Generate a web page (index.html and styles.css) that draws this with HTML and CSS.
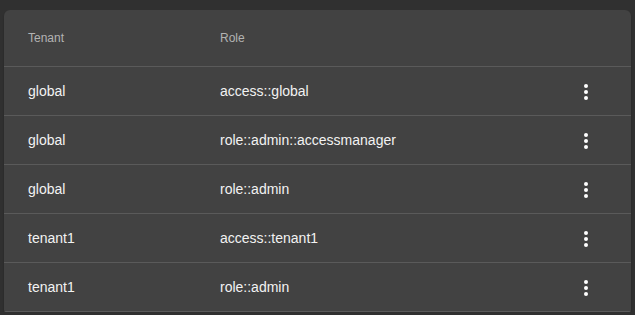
FILE: index.html
```html
<!DOCTYPE html>
<html lang="en">
  <head>
    <meta charset="UTF-8" />
    <meta name="viewport" content="width=device-width, initial-scale=1.0" />
    <title>Tenant roles</title>
    <link rel="stylesheet" href="styles.css">
  </head>
  <body>
    <div class="card">
      <table class="roles">
        <thead>
          <tr>
            <th class="col-tenant">Tenant</th>
            <th class="col-role">Role</th>
            <th class="col-menu"></th>
          </tr>
        </thead>
        <tbody>
          <tr>
            <td>global</td>
            <td>access::global</td>
            <td class="col-menu"><span class="kebab"><i></i><i></i><i></i></span></td>
          </tr>
          <tr>
            <td>global</td>
            <td>role::admin::accessmanager</td>
            <td class="col-menu"><span class="kebab"><i></i><i></i><i></i></span></td>
          </tr>
          <tr>
            <td>global</td>
            <td>role::admin</td>
            <td class="col-menu"><span class="kebab"><i></i><i></i><i></i></span></td>
          </tr>
          <tr>
            <td>tenant1</td>
            <td>access::tenant1</td>
            <td class="col-menu"><span class="kebab"><i></i><i></i><i></i></span></td>
          </tr>
          <tr>
            <td>tenant1</td>
            <td>role::admin</td>
            <td class="col-menu"><span class="kebab"><i></i><i></i><i></i></span></td>
          </tr>
        </tbody>
      </table>
    </div>
  </body>
</html>
```

FILE: styles.css
```css
body {
  font-family: "Liberation Sans", Arial, sans-serif;
  background-color: #303030;
  color: #fff;
  margin: 0;
  padding: 10px 4px 0 4px;
}

.card {
  background: #424242;
  border-radius: 6px 6px 2px 2px;
  box-shadow: 0 2px 2px rgba(0, 0, 0, 0.25);
  overflow: hidden;
}

.roles {
  width: 100%;
  border-collapse: collapse;
}

.roles th,
.roles td {
  text-align: left;
  padding: 0 0 0 24px;
  border-bottom: 1px solid #5a5a5a;
}

.roles th {
  height: 56px;
  font-size: 12px;
  font-weight: normal;
  color: #b3b3b3;
}

.roles td {
  height: 48px;
  font-size: 14px;
  color: #f2f2f2;
}

.col-tenant {
  width: 168px;
}

.col-menu {
  width: 62px;
}

.kebab {
  display: inline-flex;
  flex-direction: column;
  align-items: center;
  gap: 2px;
  width: 12px;
  vertical-align: middle;
  margin-left: 11px;
}

.kebab i {
  display: block;
  width: 4px;
  height: 4px;
  border-radius: 50%;
  background: #fff;
}
```
